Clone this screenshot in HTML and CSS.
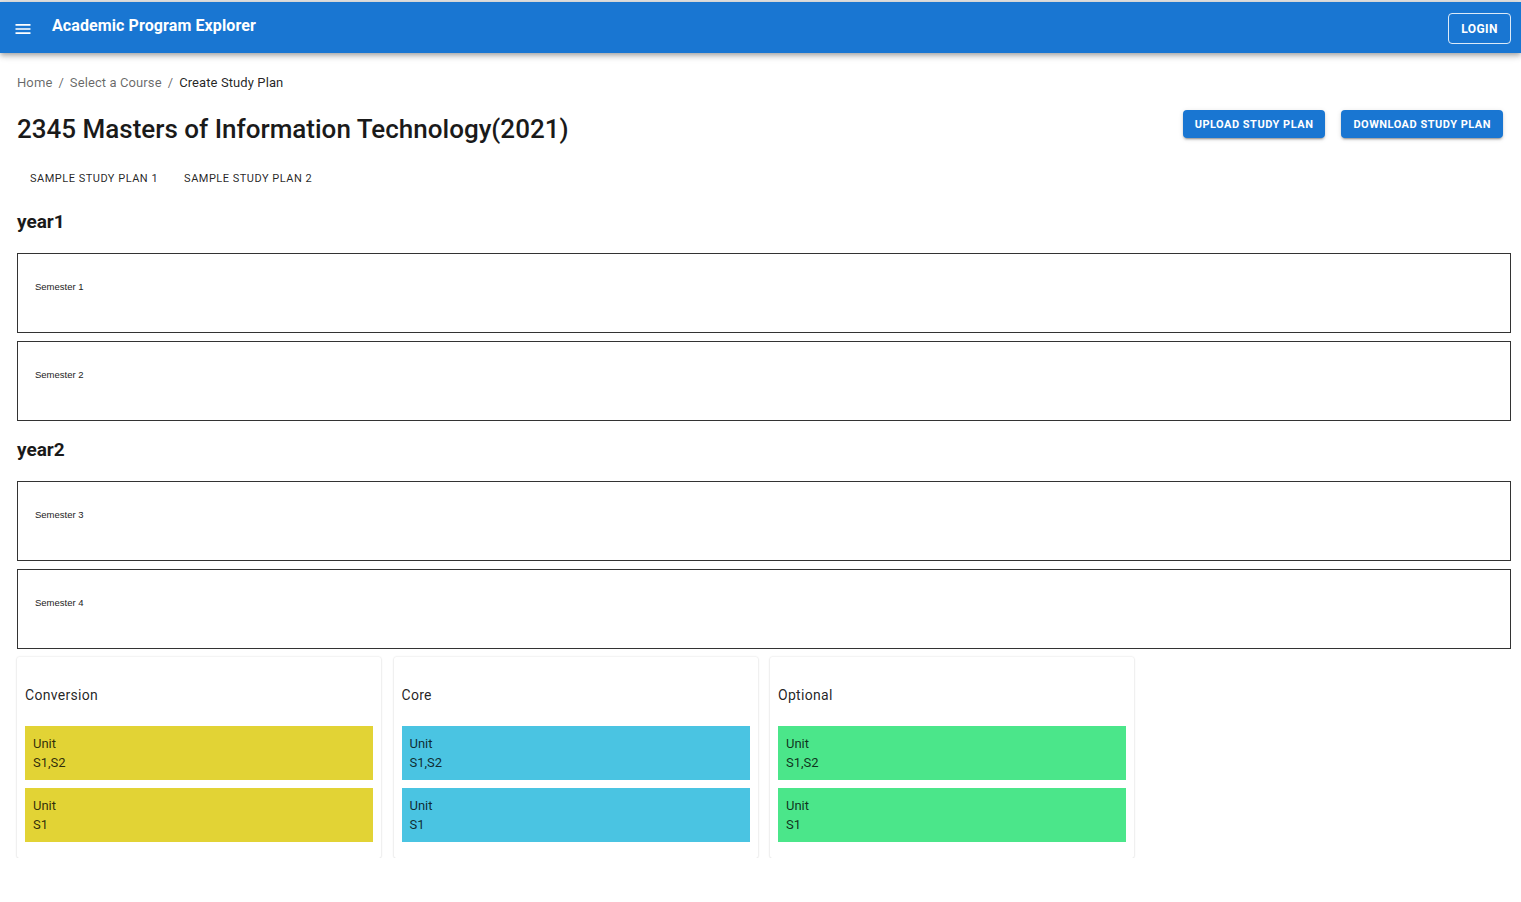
FILE: index.html
```html
<!DOCTYPE html>
<html>
<head>
<meta charset="utf-8">
<title>Academic Program Explorer</title>
<link rel="stylesheet" href="styles.css">
</head>
<body>
<div class="topline"></div>
<header class="appbar">
  <button class="menu-btn" aria-label="menu">
    <svg viewBox="0 0 24 24" width="20" height="20"><path fill="#fff" d="M3 18h18v-2H3v2zm0-5h18v-2H3v2zm0-7v2h18V6H3z"/></svg>
  </button>
  <div class="app-title">Academic Program Explorer</div>
  <div class="spacer"></div>
  <button class="login-btn">LOGIN</button>
</header>
<main class="main">
  <nav class="crumbs"><span class="crumb">Home</span><span class="sep">/</span><span class="crumb">Select a Course</span><span class="sep">/</span><span class="crumb current">Create Study Plan</span></nav>
  <div class="title-row">
    <h1 class="title">2345 Masters of Information Technology(2021)</h1>
    <div class="actions">
      <button class="btn">UPLOAD STUDY PLAN</button>
      <button class="btn">DOWNLOAD STUDY PLAN</button>
    </div>
  </div>
  <div class="tabs">
    <div class="tab">SAMPLE STUDY PLAN 1</div>
    <div class="tab">SAMPLE STUDY PLAN 2</div>
  </div>
  <h2 class="year">year1</h2>
  <div class="sem"><span class="sem-label">Semester 1</span></div>
  <div class="sem"><span class="sem-label">Semester 2</span></div>
  <h2 class="year">year2</h2>
  <div class="sem"><span class="sem-label">Semester 3</span></div>
  <div class="sem"><span class="sem-label">Semester 4</span></div>
  <div class="cards">
    <div class="card">
      <div class="card-title">Conversion</div>
      <div class="unit conv"><div>Unit</div><div>S1,S2</div></div>
      <div class="unit conv"><div>Unit</div><div>S1</div></div>
    </div>
    <div class="card">
      <div class="card-title">Core</div>
      <div class="unit core"><div>Unit</div><div>S1,S2</div></div>
      <div class="unit core"><div>Unit</div><div>S1</div></div>
    </div>
    <div class="card">
      <div class="card-title">Optional</div>
      <div class="unit opt"><div>Unit</div><div>S1,S2</div></div>
      <div class="unit opt"><div>Unit</div><div>S1</div></div>
    </div>
  </div>
</main>
</body>
</html>
```
FILE: styles.css
```css
* { box-sizing: border-box; }
html, body { margin: 0; padding: 0; background: #fff; }
body { font-family: Roboto, "Liberation Sans", Arial, sans-serif; color: rgba(0,0,0,0.87); }
.topline { height: 2px; background: #e4e4e4; }
.appbar {
  height: 51px;
  background: #1976d2;
  color: #fff;
  display: flex;
  align-items: center;
  padding: 0 10px 0 13px;
  box-shadow: 0 2px 4px -1px rgba(0,0,0,0.2), 0 4px 5px 0 rgba(0,0,0,0.14), 0 1px 10px 0 rgba(0,0,0,0.12);
  position: relative;
}
.menu-btn {
  background: none; border: 0; padding: 0; width: 20px; height: 20px;
  display: flex; margin-top: 3px;
}
.app-title { font-size: 16px; font-weight: 700; margin-left: 19px; margin-top: -4px; letter-spacing: 0.1px; }
.spacer { flex: 1; }
.login-btn {
  width: 63px; height: 31px;
  border: 1px solid rgba(255,255,255,0.85);
  border-radius: 4px;
  background: transparent;
  color: #fff;
  font-family: Roboto, sans-serif;
  font-size: 12px;
  font-weight: 700;
  letter-spacing: 0.4px;
  padding: 0;
  margin-top: 2px;
}
.main { padding: 0 10px 0 17px; }
.crumbs { margin-top: 20px; font-size: 13px; line-height: 20px; color: rgba(0,0,0,0.6); letter-spacing: 0.1px; }
.sep { margin: 0 6px; }
.crumb.current { color: rgba(0,0,0,0.87); }
.title-row { display: flex; align-items: flex-start; margin-top: 17px; height: 38px; }
.title { margin: 0; font-size: 26px; font-weight: 500; line-height: 38px; flex: 1; color: #1a1a1a; }
.actions { display: flex; gap: 16px; margin-right: 8px; }
.btn {
  height: 28px;
  background: #1976d2;
  color: #fff;
  border: 0;
  border-radius: 4px;
  font-family: Roboto, sans-serif;
  font-size: 11px;
  font-weight: 700;
  letter-spacing: 0.5px;
  padding: 0 12px;
  box-shadow: 0 3px 1px -2px rgba(0,0,0,0.2), 0 2px 2px 0 rgba(0,0,0,0.14), 0 1px 5px 0 rgba(0,0,0,0.12);
}
.tabs { display: flex; margin-top: 6px; height: 48px; align-items: center; }
.tab { font-size: 11px; font-weight: 400; letter-spacing: 0.5px; padding: 0 13px; color: rgba(0,0,0,0.87); }
.year { margin: 8px 0 19px; font-size: 19px; font-weight: 700; line-height: 24px; color: #1a1a1a; }
.sem {
  height: 80px;
  border: 1px solid #333;
  margin-bottom: 8px;
  padding: 21px 0 0 17px;
}
.sem + .year { margin-top: 17px; }
.sem-label { font-family: "Liberation Sans", Arial, sans-serif; font-size: 9.5px; line-height: 12px; color: #222; }
.cards { display: flex; gap: 12.5px; }
.card {
  width: 364px;
  background: #fff;
  border-radius: 2px;
  box-shadow: 0 0 2px rgba(0,0,0,0.16), 0 1px 2px rgba(0,0,0,0.08);
  padding: 8px 8px 16px;
}
.card-title { font-size: 14px; line-height: 20px; margin: 20px 0 21px; letter-spacing: 0.3px; color: rgba(0,0,0,0.87); }
.unit { height: 54px; padding: 8px; font-size: 13px; line-height: 19px; color: rgba(0,0,0,0.8); }
.unit + .unit { margin-top: 8px; }
.conv { background: #e2d335; }
.core { background: #4ac4e2; }
.opt { background: #4be68a; }
```
